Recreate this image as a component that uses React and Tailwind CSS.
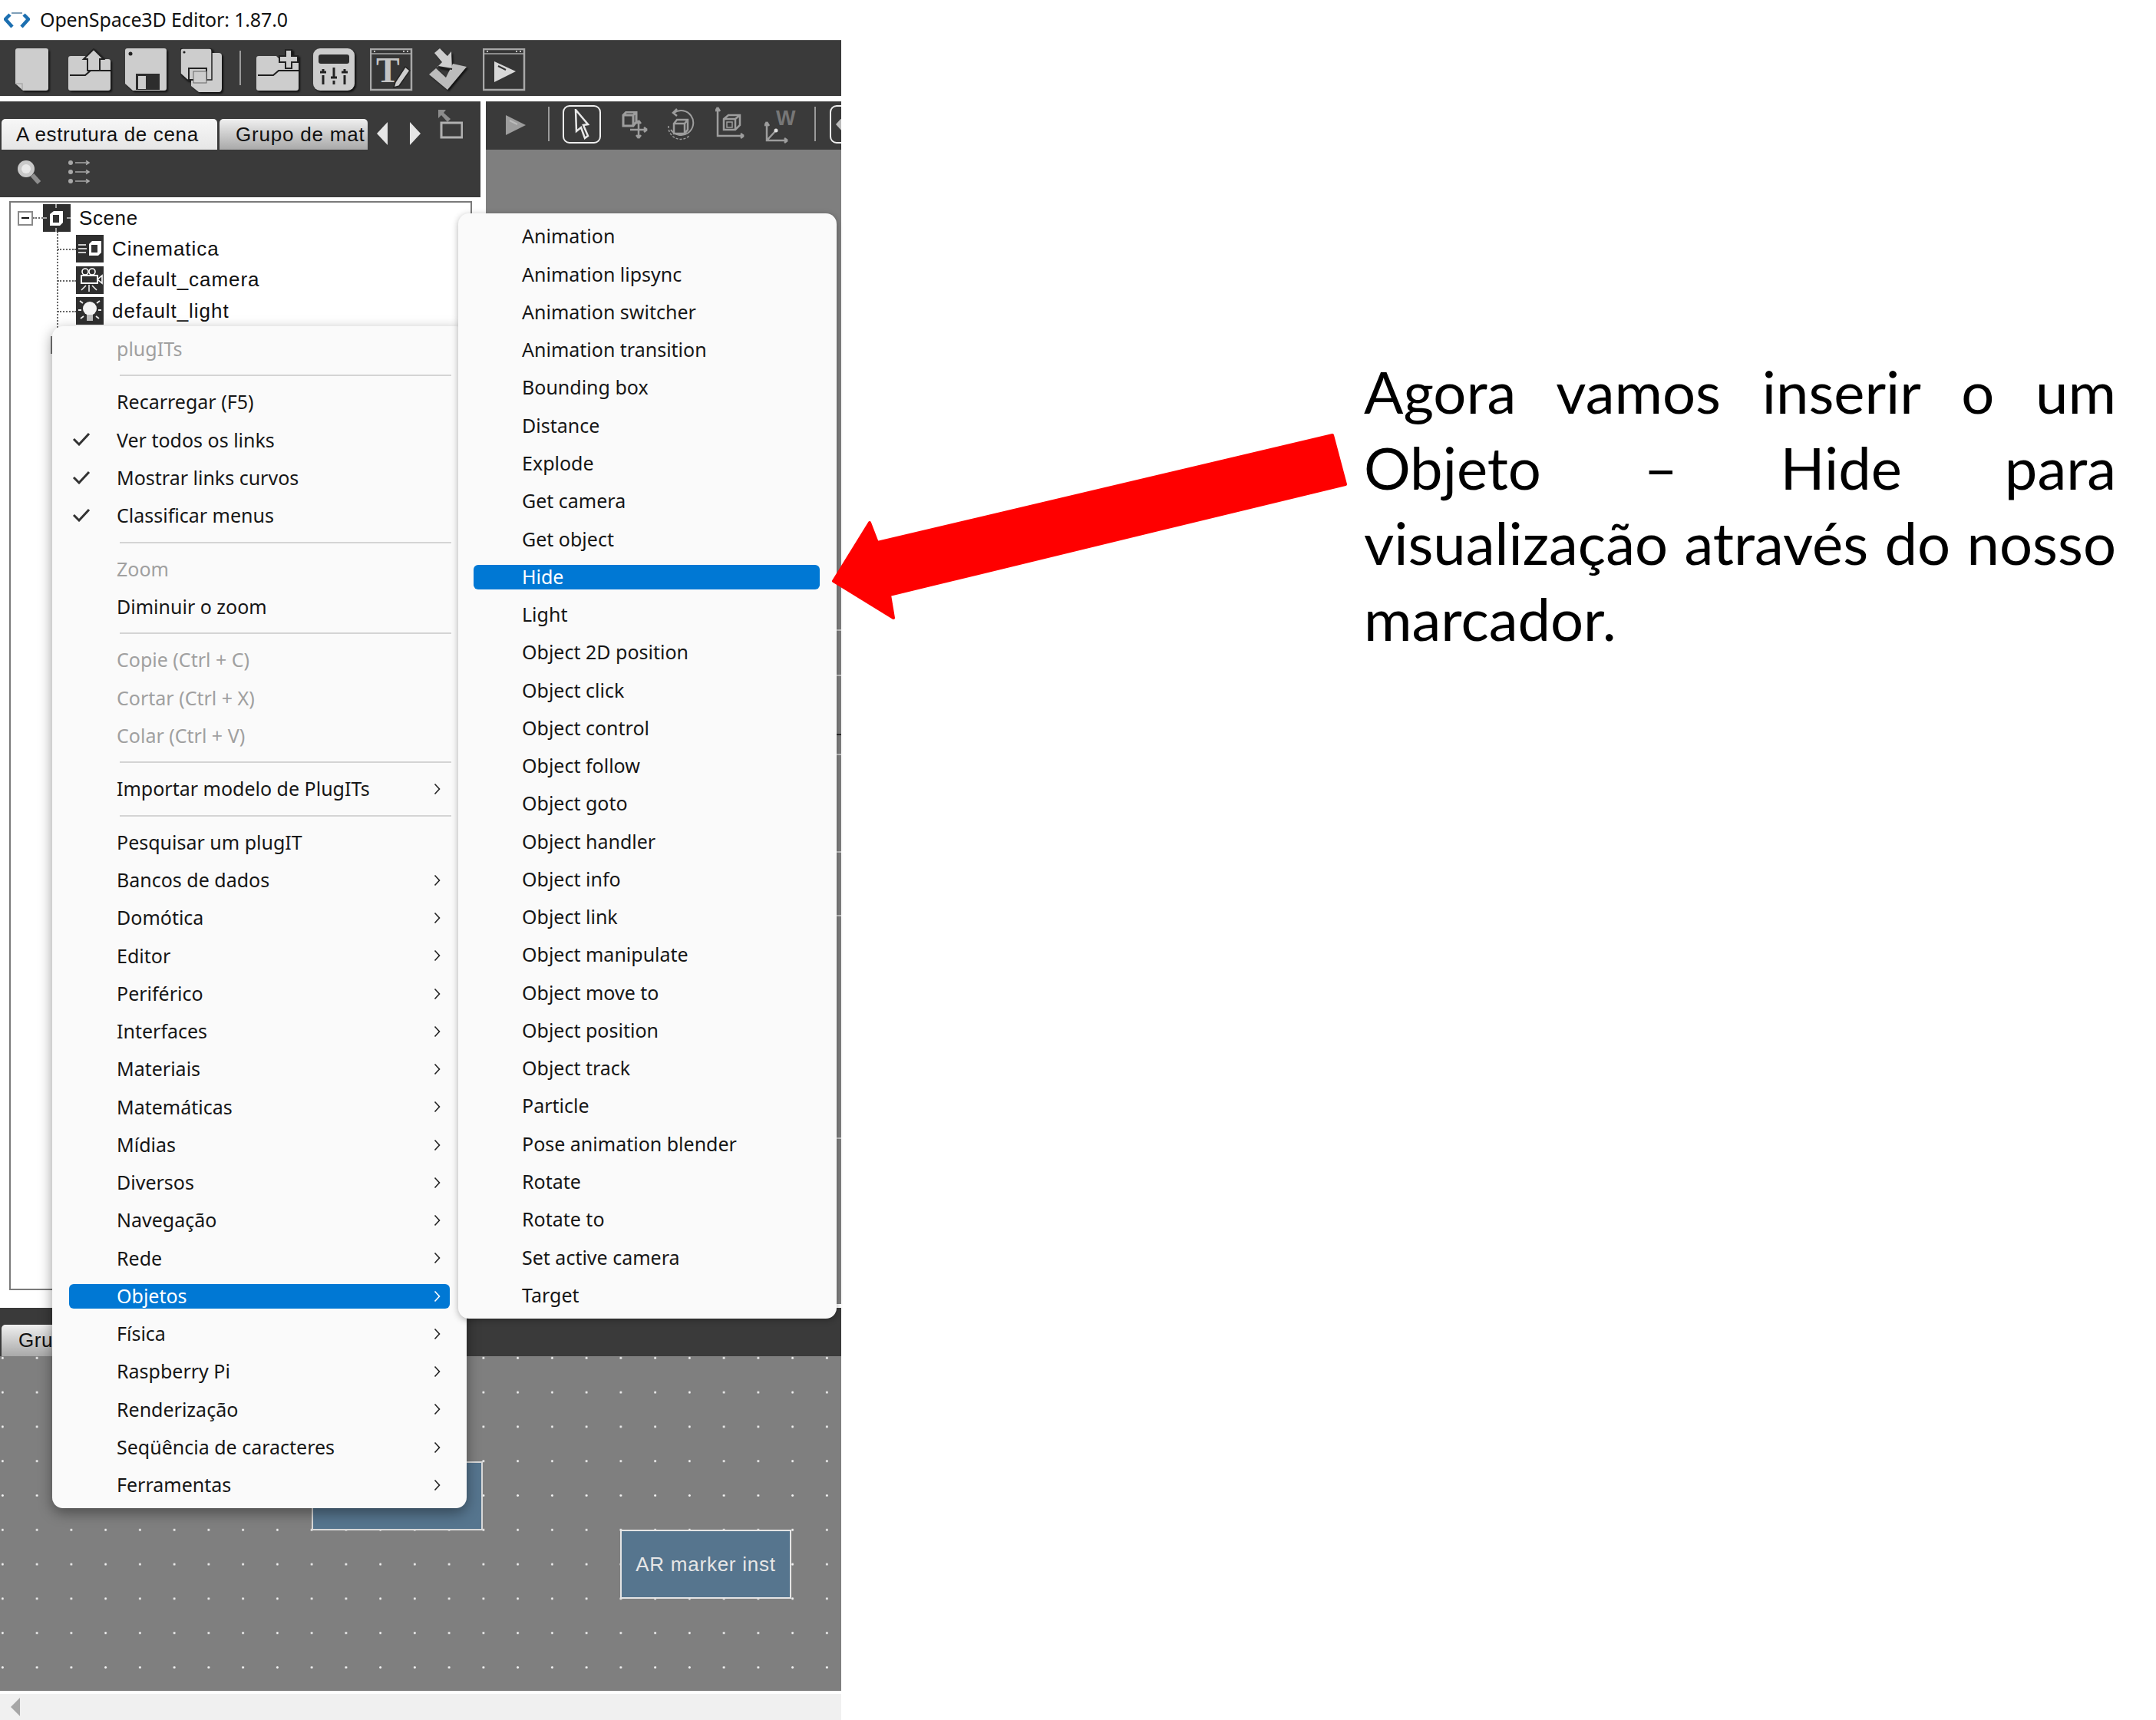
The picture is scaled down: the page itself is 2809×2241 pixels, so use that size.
import React from "react";

const G = "#cdcdcd";

function Svg({ x = 0, w, h, vb, className = "", children, y = 0 }) {
  return (
    <svg
      width={w}
      height={h}
      viewBox={vb || `0 0 ${w} ${h}`}
      className={"shrink-0 " + className}
      style={{ marginLeft: x, marginTop: y }}
    >
      {children}
    </svg>
  );
}

const shadow = "drop-shadow-[2px_2px_1px_#111]";

function Folder() {
  return (
    <>
      <path d="M0 13 Q0 10 3 10 H26 L30 14 H52 Q55 14 55 17 V52 Q55 55 52 55 H3 Q0 55 0 52 Z" fill={G} />
      <path d="M2 35 H22 L29 29 H55" fill="none" stroke="#1e1e1e" strokeWidth="2" />
    </>
  );
}

function TopToolbar() {
  return (
    <div className="flex h-[73px] w-full items-start bg-[#3a3a3a] pt-[10px] border-t border-[#555]">
      <Svg x={20} w={44} h={56} className={shadow}>
        <path d="M3 0 H40 Q43 0 43 3 V52 Q43 55 40 55 H10 L0 46 V3 Q0 0 3 0 Z" fill={G} />
        <path d="M1 46 H9 V54" fill="none" stroke="#aaa" strokeWidth="1.5" />
      </Svg>
      <Svg x={25} w={56} h={56} className={shadow}>
        <Folder />
        <path d="M33 1 L46 14 H41 V29 H25 V14 H20 Z" fill={G} stroke="#222" strokeWidth="2" />
      </Svg>
      <Svg x={18} w={55} h={56} className={shadow}>
        <path d="M3 0 H51 Q54 0 54 3 V52 Q54 55 51 55 H10 L0 46 V3 Q0 0 3 0 Z" fill={G} />
        <circle cx="7" cy="7" r="2.5" fill="#222" />
        <rect x="14" y="33" width="31" height="21" fill="#2d2d2d" />
        <rect x="17" y="36" width="10" height="17" fill={G} />
      </Svg>
      <Svg x={17} w={56} h={58} className={shadow}>
        <path d="M14 6 H50 Q54 6 54 10 V52 Q54 57 50 57 H24 L14 49 Z" fill={G} />
        <path d="M3 0 H38 Q41 0 41 3 V41 H9 L0 33 V3 Q0 0 3 0 Z" fill={G} stroke="#222" strokeWidth="1.5" />
        <circle cx="5" cy="5" r="1.6" fill="#222" />
        <rect x="11" y="26" width="23" height="15" fill={G} stroke="#222" strokeWidth="2" />
        <rect x="17" y="30" width="17" height="15" fill={G} stroke="#666" strokeWidth="1" />
      </Svg>
      <div className="ml-[21px] mt-[3px] h-[45px] w-[2px] shrink-0 bg-[#9a9a9a]" />
      <Svg x={20} w={56} h={56} className={shadow}>
        <Folder />
        <path d="M38 2 H46 V10 H54 V18 H46 V26 H38 V18 H30 V10 H38 Z" fill={G} stroke="#222" strokeWidth="2" />
      </Svg>
      <Svg x={18} w={55} h={56} className={shadow}>
        <rect x="0" y="0" width="54" height="55" rx="9" fill={G} />
        <rect x="7" y="8" width="40" height="12" rx="3" fill="#2d2d2d" />
        <path d="M13 27 V31 M9 31 H17 M13 35 V47 M27 25 V38 M23 38 H31 M27 42 V47 M41 27 V31 M37 31 H45 M41 35 V47" stroke="#222" strokeWidth="3" fill="none" />
      </Svg>
      <Svg x={19} w={56} h={56}>
        <rect x="1" y="1" width="53" height="53" fill="#353535" stroke="#a8a8a8" strokeWidth="2.5" />
        <path d="M2 7 H53" stroke="#a8a8a8" strokeWidth="1.5" />
        <circle cx="6" cy="4" r="1" fill="#eee" />
        <circle cx="44" cy="4" r="1" fill="#eee" />
        <circle cx="49" cy="4" r="1" fill="#eee" />
        <text x="8" y="44" fontFamily="'Liberation Serif', serif" fontWeight="700" fontSize="46" fill="#c4c4c4">T</text>
        <path d="M33 44 L46 24 L52 29 L38 49 L31 51 Z" fill={G} stroke="#222" strokeWidth="1.5" />
      </Svg>
      <Svg x={21} w={50} h={56} className={shadow}>
        <path d="M7 6 L14 0 L24 10 L29 4 L30 27 L11 24 L17 18 Z" fill={G} />
        <path d="M0 34 L9 26 L22 38 L31 20 L49 24 L24 54 Z" fill="#bcbcbc" />
        <path d="M12 24 L30 27" stroke="#222" strokeWidth="2" />
      </Svg>
      <Svg x={20} w={56} h={56}>
        <rect x="1" y="1" width="53" height="53" fill="#353535" stroke="#a8a8a8" strokeWidth="2.5" />
        <path d="M2 7 H53" stroke="#a8a8a8" strokeWidth="1.5" />
        <circle cx="6" cy="4" r="1" fill="#eee" />
        <circle cx="44" cy="4" r="1" fill="#eee" />
        <circle cx="49" cy="4" r="1" fill="#eee" />
        <path d="M15 17 L43 30 L15 44 Z" fill="#d8d8d8" />
        <path d="M20 23 L30 28" stroke="#333" strokeWidth="2" />
      </Svg>
    </div>
  );
}

function LeftPanelHeader() {
  return (
    <div className="h-[125px] w-full bg-[#3a3a3a] border-t border-[#555] flex flex-col">
      <div className="flex h-[62px] items-end">
        <div className="ml-[2px] flex h-[40px] w-[281px] items-center rounded-t-[5px] bg-gradient-to-b from-[#f7f7f7] to-[#e6e6e6] pl-[19px] text-[26px] tracking-[0.65px] text-[#111] font-['Liberation_Sans',sans-serif]">
          A estrutura de cena
        </div>
        <div className="ml-[3px] flex h-[40px] w-[193px] items-center overflow-hidden whitespace-nowrap rounded-t-[5px] bg-gradient-to-b from-[#f0f0f0] to-[#a9a9a9] pl-[21px] text-[26px] tracking-[0.8px] text-[#111] font-['Liberation_Sans',sans-serif]">
          Grupo de mat
        </div>
        <Svg x={11} w={16} h={30} className="mb-[6px]">
          <path d="M15 0 V30 L1 15 Z" fill="#e6e6e6" />
        </Svg>
        <Svg x={27} w={16} h={30} className="mb-[6px]">
          <path d="M1 0 V30 L15 15 Z" fill="#e6e6e6" />
        </Svg>
        <Svg x={20} w={34} h={38} className="mb-[14px]">
          <path d="M2 0 H12 L9 4 L18 12 L14 16 L6 7 L2 11 Z" fill="#8d8d8d" />
          <rect x="6" y="17" width="27" height="19" fill="none" stroke="#b0b0b0" strokeWidth="3" />
        </Svg>
      </div>
      <div className="flex items-start pt-[13px]">
        <Svg x={22} w={31} h={33}>
          <circle cx="12" cy="12" r="11" fill="#c9c9c9" />
          <circle cx="12" cy="12" r="6" fill="#e9e9e9" />
          <path d="M20 20 L29 30" stroke="#8e8e8e" strokeWidth="6" />
        </Svg>
        <Svg x={34} w={31} h={32}>
          {[4, 16, 28].map((y) => (
            <g key={y}>
              <circle cx="5" cy={y} r="3" fill="#a8a8a8" />
              <path d={`M11 ${y} H29 M25 ${y - 2.5} L29 ${y} L25 ${y + 2.5}`} fill="none" stroke="#a8a8a8" strokeWidth="1.5" />
            </g>
          ))}
        </Svg>
      </div>
    </div>
  );
}

function TreeIcon({ kind }) {
  return (
    <svg width="36" height="36" viewBox="0 0 36 36" className="shrink-0">
      <rect width="36" height="36" fill="#2f2f2f" />
      {kind === "scene" && (
        <g>
          <path d="M17 0 V5 M17 31 V36 M0 18 H5 M31 18 H36" stroke="#ccc" strokeWidth="1.5" />
          <path d="M9 13 L14 9 H26 V24 L22 28 H9 Z" fill="#fff" />
          <rect x="13" y="14" width="8" height="10" fill="#333" />
        </g>
      )}
      {kind === "cine" && (
        <g>
          <path d="M17 12 L21 8 H33 V23 L29 27 H17 Z" fill="#fff" />
          <rect x="20" y="13" width="8" height="10" fill="#333" />
          <path d="M3 13 H13 M3 18 H14 M3 23 H13" stroke="#ccc" strokeWidth="2" />
        </g>
      )}
      {kind === "cam" && (
        <g>
          <circle cx="12" cy="7" r="4" fill="none" stroke="#fff" strokeWidth="1.6" />
          <circle cx="21" cy="7" r="4" fill="none" stroke="#fff" strokeWidth="1.6" />
          <rect x="7" y="12" width="21" height="10" fill="none" stroke="#fff" strokeWidth="2" />
          <path d="M28 17 L34 12 V22 Z" fill="none" stroke="#fff" strokeWidth="1.6" />
          <path d="M17 24 V33 M13 25 L7 31 M21 25 L27 31" stroke="#eee" strokeWidth="1.6" />
        </g>
      )}
      {kind === "light" && (
        <g>
          <circle cx="18" cy="15" r="9" fill="#f4f4f4" />
          <rect x="14" y="23" width="8" height="8" fill="#bbb" />
          <path d="M5 5 L9 8 M31 5 L27 8 M3 17 H7 M33 17 H29 M6 28 L10 25 M30 28 L26 25" stroke="#eee" strokeWidth="1.8" />
        </g>
      )}
    </svg>
  );
}

function TreeChild({ kind, label }) {
  return (
    <div className="relative ml-[85px] flex h-[36px] items-center mb-[4.5px]">
      <div className="absolute left-[-24px] top-[18px] w-[24px] border-t-2 border-dotted border-[#666]" />
      <TreeIcon kind={kind} />
      <span className="ml-[11px] text-[26px] tracking-[0.95px] text-[#111]">{label}</span>
    </div>
  );
}

function Tree() {
  return (
    <div className="relative ml-[12px] mt-[5px] h-[1419px] w-[603px] border-2 border-[#7a7a7a] bg-white pt-[2px] font-['Liberation_Sans',sans-serif]">
      <div className="absolute left-[60px] top-[38px] h-[125px] border-l-2 border-dotted border-[#666]" />
      <div className="absolute left-[52px] top-[174px] h-[23px] w-[3px] bg-[#777]" />
      <div className="mb-[4px] flex h-[36px] items-center">
        <div className="ml-[9px] flex h-[19px] w-[20px] items-center justify-center border-2 border-[#8a8a8a] bg-white">
          <div className="h-[2px] w-[10px] bg-[#111]" />
        </div>
        <div className="w-[13px] border-t-2 border-dotted border-[#666]" />
        <TreeIcon kind="scene" />
        <span className="ml-[11px] text-[26px] tracking-[0.6px] text-[#111]">Scene</span>
      </div>
      <TreeChild kind="cine" label="Cinematica" />
      <TreeChild kind="cam" label="default_camera" />
      <TreeChild kind="light" label="default_light" />
    </div>
  );
}

function RightToolbar() {
  const s = "#9d9d9d";
  return (
    <div className="flex h-[63px] w-full shrink-0 items-start overflow-hidden bg-[#3a3a3a] border-t border-[#555]">
      <Svg x={25} w={28} h={26} y={17}>
        <path d="M1 0 L27 13 L1 26 Z" fill={s} />
        <path d="M6 7 L16 12" stroke="#bbb" strokeWidth="2" />
      </Svg>
      <div className="ml-[28px] mt-[6px] h-[45px] w-[2px] shrink-0 bg-[#9a9a9a]" />
      <div className="ml-[17px] mt-[4px] flex h-[50px] w-[50px] shrink-0 items-center justify-center rounded-[9px] border-2 border-[#eee]">
        <svg width="20" height="40" viewBox="0 0 20 40">
          <path d="M2 1 L18 20 L12 21 L18 35 L14 38 L9 24 L3 29 Z" fill="#3a3a3a" stroke="#e8e8e8" strokeWidth="2.5" />
        </svg>
      </div>
      <Svg x={25} w={36} h={36} y={12}>
        <path d="M4 5 L8 1 H21 V14 L17 19 H4 Z M4 5 H17 V19 M17 5 L21 1" fill="none" stroke={s} strokeWidth="3" />
        <path d="M24 12 V35 M13 24 H35 M24 12 L21 16 M24 12 L27 16 M24 35 L21 31 M24 35 L27 31 M35 24 L31 21 M35 24 L31 27" stroke={s} strokeWidth="2.5" fill="none" />
      </Svg>
      <Svg x={24} w={37} h={42} y={8}>
        <path d="M10 6 A16 16 0 1 1 6 28" fill="none" stroke={s} strokeWidth="2" />
        <path d="M3 23 A16 16 0 0 0 30 36" fill="none" stroke={s} strokeWidth="1.5" strokeDasharray="3 2" />
        <path d="M14 1 L9 6 L14 10" fill="none" stroke={s} strokeWidth="2.5" />
        <path d="M10 20 L14 15 H28 V28 L24 33 H10 Z M10 20 H24 V33 M24 20 L28 15" fill="none" stroke={s} strokeWidth="2.5" />
      </Svg>
      <Svg x={27} w={38} h={42} y={6}>
        <path d="M3 1 V38 H37 M3 1 L0 6 M3 1 L6 6 M37 38 L33 35 M37 38 L33 41" fill="none" stroke={s} strokeWidth="2.5" />
        <path d="M11 16 L17 11 H32 V24 L26 30 H11 Z M11 16 H26 V30 M26 16 L32 11" fill="none" stroke={s} strokeWidth="2.5" />
        <rect x="15" y="20" width="7" height="7" fill="none" stroke={s} strokeWidth="1.5" />
      </Svg>
      <Svg x={26} w={44} h={48} y={6}>
        <text x="15" y="24" fontFamily="'Liberation Sans', sans-serif" fontWeight="700" fontSize="27" fill="#777">W</text>
        <path d="M3 20 V44 H30 M3 20 L0 25 M3 20 L6 25 M30 44 L26 41 M30 44 L26 47 M3 44 L15 31" fill="none" stroke={s} strokeWidth="2.5" />
        <circle cx="15" cy="31" r="2.5" fill="#ddd" />
      </Svg>
      <div className="ml-[21px] mt-[6px] h-[45px] w-[2px] shrink-0 bg-[#9a9a9a]" />
      <div className="ml-[18px] mt-[4px] flex h-[50px] w-[50px] shrink-0 items-center rounded-[9px] border-2 border-[#eee] pl-[6px]">
        <svg width="10" height="22"><path d="M10 0 L0 11 L10 22 Z" fill="#bbb" /></svg>
      </div>
    </div>
  );
}

function Chevron({ color = "#222" }) {
  return (
    <svg width="9" height="16" viewBox="0 0 9 16" className="absolute right-[12px] top-1/2 -translate-y-1/2">
      <path d="M1.5 1.5 L7.5 8 L1.5 14.5" fill="none" stroke={color} strokeWidth="1.6" />
    </svg>
  );
}

function Row({ label, disabled, checked, arrow, active, pad }) {
  return (
    <div className={"flex h-[49.27px] items-center " + pad.outer}>
      <div
        className={
          "relative flex h-[32px] w-full items-center whitespace-nowrap rounded-[6px] " +
          pad.inner +
          (active ? " bg-[#0078d4] text-white" : disabled ? " text-[#a0a0a0]" : " text-[#161616]")
        }
      >
        {checked && (
          <svg width="24" height="18" viewBox="0 0 24 18" className="absolute left-[4px] top-[6px]">
            <path d="M2 9 L9 16 L22 2" fill="none" stroke="#333" strokeWidth="3" />
          </svg>
        )}
        {label}
        {arrow && <Chevron color={active ? "#fff" : "#222"} />}
      </div>
    </div>
  );
}

const Sep = () => (
  <div className="flex h-[20.2px] items-center pl-[88px] pr-[20px]">
    <div className="h-[2px] w-full bg-[#d4d4d4]" />
  </div>
);

const menuFont = "font-['Noto_Sans',sans-serif] text-[25px] tracking-[0px]";
const pad1 = { outer: "pl-[22px] pr-[22px]", inner: "pl-[62px]" };
const pad2 = { outer: "pl-[20px] pr-[22px]", inner: "pl-[63px]" };

function MainMenu() {
  const sub = ["Bancos de dados", "Domótica", "Editor", "Periférico", "Interfaces", "Materiais", "Matemáticas", "Mídias", "Diversos", "Navegação", "Rede"];
  const sub2 = ["Física", "Raspberry Pi", "Renderização", "Seqüência de caracteres", "Ferramentas"];
  const R = (p) => <Row key={p.label} pad={pad1} {...p} />;
  return (
    <div className={"absolute left-[68px] top-[425px] w-[540px] rounded-[14px] bg-[#fafafa] pb-[5.5px] pt-[5px] shadow-[0_6px_18px_rgba(0,0,0,0.4)] " + menuFont}>
      {R({ label: "plugITs", disabled: true })}
      <Sep />
      {R({ label: "Recarregar (F5)" })}
      {R({ label: "Ver todos os links", checked: true })}
      {R({ label: "Mostrar links curvos", checked: true })}
      {R({ label: "Classificar menus", checked: true })}
      <Sep />
      {R({ label: "Zoom", disabled: true })}
      {R({ label: "Diminuir o zoom" })}
      <Sep />
      {R({ label: "Copie (Ctrl + C)", disabled: true })}
      {R({ label: "Cortar (Ctrl + X)", disabled: true })}
      {R({ label: "Colar (Ctrl + V)", disabled: true })}
      <Sep />
      {R({ label: "Importar modelo de PlugITs", arrow: true })}
      <Sep />
      {R({ label: "Pesquisar um plugIT" })}
      {sub.map((l) => R({ label: l, arrow: true }))}
      {R({ label: "Objetos", arrow: true, active: true })}
      {sub2.map((l) => R({ label: l, arrow: true }))}
    </div>
  );
}

function SubMenu() {
  const items = ["Animation", "Animation lipsync", "Animation switcher", "Animation transition", "Bounding box", "Distance", "Explode", "Get camera", "Get object", "Hide", "Light", "Object 2D position", "Object click", "Object control", "Object follow", "Object goto", "Object handler", "Object info", "Object link", "Object manipulate", "Object move to", "Object position", "Object track", "Particle", "Pose animation blender", "Rotate", "Rotate to", "Set active camera", "Target"];
  return (
    <div className={"absolute left-[597px] top-[278px] w-[493px] rounded-[14px] bg-[#fafafa] py-[5.5px] shadow-[0_2px_8px_rgba(0,0,0,0.3)] " + menuFont}>
      {items.map((l) => (
        <Row key={l} label={l} pad={pad2} active={l === "Hide"} />
      ))}
    </div>
  );
}

function Canvas() {
  return (
    <div className="relative h-[436px] w-full shrink-0 bg-[#7f7f7f] bg-[radial-gradient(circle,#f2f2f2_1.1px,transparent_1.7px)] bg-[size:44.75px_44.8px] bg-[position:-19px_-20.1px] font-['Liberation_Sans',sans-serif]">
      <div className="absolute left-[406px] top-[137px] h-[90px] w-[223px] border-2 border-[#d8d8d8] bg-[#56758e]" />
      <div className="absolute left-[808px] top-[226px] flex h-[90px] w-[223px] items-center justify-center border-2 border-[#e4e4e4] bg-[#56758e] text-[26px] tracking-[0.75px] text-[#e6e6e6]">
        AR marker inst
      </div>
    </div>
  );
}

const lines = ["Agora vamos inserir o um", "Objeto – Hide para", "visualização através do nosso"];
const ticks = [
  { y: 625, c: "#c4c4c4" },
  { y: 684, c: "#c4c4c4" },
  { y: 761, c: "#2a2a2a" },
  { y: 787, c: "#c4c4c4" },
  { y: 914, c: "#c4c4c4" },
  { y: 997, c: "#c4c4c4" },
  { y: 1287, c: "#c4c4c4" },
];

export default function App() {
  return (
    <div className="relative flex h-[2241px] w-[2809px] overflow-hidden bg-white">
      <div className="flex w-[1096px] shrink-0 flex-col">
        <div className="flex h-[52px] shrink-0 items-center text-[25px] tracking-[-0.15px] text-[#111] font-['Noto_Sans',sans-serif]">
          <svg width="34" height="22" viewBox="0 0 34 22" className="ml-[5px] mr-[13px]">
            <path d="M8 4 L2 10 L11 20" fill="none" stroke="#1c6fb0" strokeWidth="4.5" strokeLinejoin="round" />
            <path d="M26 4 L32 10 L23 20" fill="none" stroke="#1c6fb0" strokeWidth="4.5" strokeLinejoin="round" />
            <path d="M10 2 H24" stroke="#7f9fb8" strokeWidth="2" />
          </svg>
          OpenSpace3D Editor: 1.87.0
        </div>
        <TopToolbar />
        <div className="h-[7px] shrink-0 bg-white" />
        <div className="flex h-[1572px] shrink-0">
          <div className="w-[626px] shrink-0">
            <LeftPanelHeader />
            <Tree />
          </div>
          <div className="ml-[7px] flex w-[463px] flex-col">
            <RightToolbar />
            <div className="relative flex-1 bg-[#7f7f7f]">
              {ticks.map((t) => (
                <div
                  key={t.y}
                  className="absolute right-0 h-[2px] w-[7px]"
                  style={{ top: t.y, backgroundColor: t.c }}
                />
              ))}
            </div>
            <div className="h-[5px] shrink-0 bg-white" />
          </div>
        </div>
        <div className="flex h-[63px] shrink-0 items-end bg-[#3a3a3a]">
          <div className="ml-[2px] flex h-[41px] w-[120px] items-center rounded-t-[5px] bg-gradient-to-b from-[#f0f0f0] to-[#a9a9a9] pl-[22px] text-[26px] tracking-[0.5px] text-[#111] font-['Liberation_Sans',sans-serif]">
            Gru
          </div>
        </div>
        <Canvas />
        <div className="flex min-h-0 flex-1 items-center border-t-4 border-white bg-[#f0f0f0] pl-[13px]">
          <svg width="14" height="24"><path d="M13 0 V24 L1 12 Z" fill="#a6a6a6" /></svg>
        </div>
      </div>
      <div className="ml-[681px] w-[980px] shrink-0 pt-[461px] text-[76px] leading-[98.5px] text-black font-['Lato',sans-serif]">
        {lines.map((l) => (
          <div key={l} className="text-justify [text-align-last:justify]">
            {l}
          </div>
        ))}
        <div>marcador.</div>
      </div>
      <MainMenu />
      <SubMenu />
      <svg width="680" height="260" viewBox="1080 560 680 260" className="absolute left-[1080px] top-[560px]">
        <path d="M1736 567 L1753 631 L1159 775 L1164 805 L1086 757 L1133 681 L1143 707 Z" fill="#ff0000" stroke="#ff0000" strokeWidth="4" strokeLinejoin="round" />
      </svg>
    </div>
  );
}
